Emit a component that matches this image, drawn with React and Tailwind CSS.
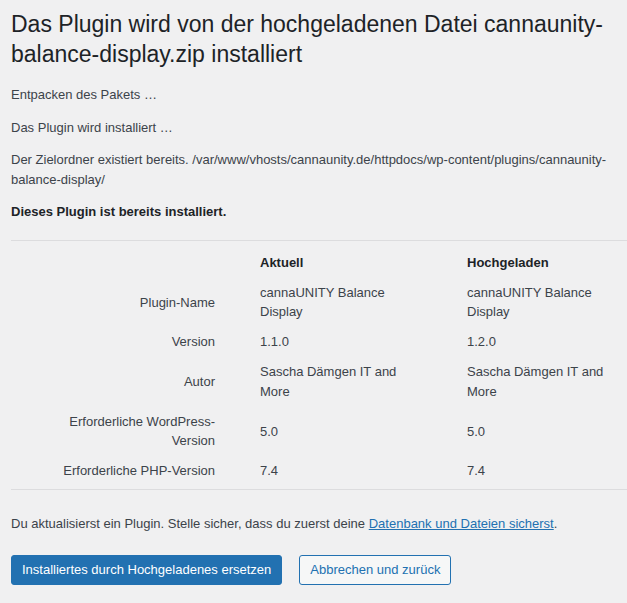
import React from 'react'

const rows = [
    { label: 'Plugin-Name', current: 'cannaUNITY Balance Display', uploaded: 'cannaUNITY Balance Display' },
    { label: 'Version', current: '1.1.0', uploaded: '1.2.0' },
    { label: 'Autor', current: 'Sascha Dämgen IT and More', uploaded: 'Sascha Dämgen IT and More' },
    { label: 'Erforderliche WordPress-Version', current: '5.0', uploaded: '5.0' },
    { label: 'Erforderliche PHP-Version', current: '7.4', uploaded: '7.4' },
]

const App = () => {
    return (
        <div className="min-h-screen bg-[#f0f0f1] pl-[11px] font-['Liberation_Sans',Arial,sans-serif] text-[13px] leading-[19.5px] text-[#3c434a]">
            <h1 className="pt-[9px] pb-[3px] text-[23px] leading-[30px] font-normal text-[#1d2327]">
                Das Plugin wird von der hochgeladenen Datei cannaunity-balance-display.zip installiert
            </h1>

            <p className="mt-[13px]">Entpacken des Pakets …</p>
            <p className="mt-[13px]">Das Plugin wird installiert …</p>
            <p className="mt-[13px]">
                Der Zielordner existiert bereits. /var/www/vhosts/cannaunity.de/httpdocs/wp-content/plugins/cannaunity-balance-display/
            </p>
            <p className="mt-[13px] font-semibold text-[#1d2327]">Dieses Plugin ist bereits installiert.</p>

            {/* Vergleichstabelle */}
            <div className="mt-[18px] border-y border-[#dcdcde] pt-[7px] pb-[3px]">
                <div className="grid grid-cols-[249px_207px_1fr]">
                    <div className="py-[5.25px]"></div>
                    <div className="py-[5.25px] font-semibold text-[#1d2327]">Aktuell</div>
                    <div className="py-[5.25px] font-semibold text-[#1d2327]">Hochgeladen</div>
                </div>
                {rows.map((row) => (
                    <div key={row.label} className="grid grid-cols-[249px_207px_1fr] items-center">
                        <div className="flex justify-end py-[5.25px] pr-[45px]">
                            <div className="max-w-[160px] text-right">{row.label}</div>
                        </div>
                        <div className="py-[5.25px]">
                            <div className="max-w-[150px]">{row.current}</div>
                        </div>
                        <div className="py-[5.25px]">
                            <div className="max-w-[150px]">{row.uploaded}</div>
                        </div>
                    </div>
                ))}
            </div>

            <p className="mt-[24px]">
                Du aktualisierst ein Plugin. Stelle sicher, dass du zuerst deine{' '}
                <a href="#" className="text-[#2271b1] underline">Datenbank und Dateien sicherst</a>.
            </p>

            <div className="mt-[21px] flex gap-[17px] pb-[18px]">
                <button className="h-[30px] rounded-[3px] border border-[#2271b1] bg-[#2271b1] px-[10px] leading-[28px] text-white">
                    Installiertes durch Hochgeladenes ersetzen
                </button>
                <button className="h-[30px] rounded-[3px] border border-[#2271b1] bg-[#f6f7f7] px-[10px] leading-[28px] text-[#2271b1]">
                    Abbrechen und zurück
                </button>
            </div>
        </div>
    )
}

export default App
